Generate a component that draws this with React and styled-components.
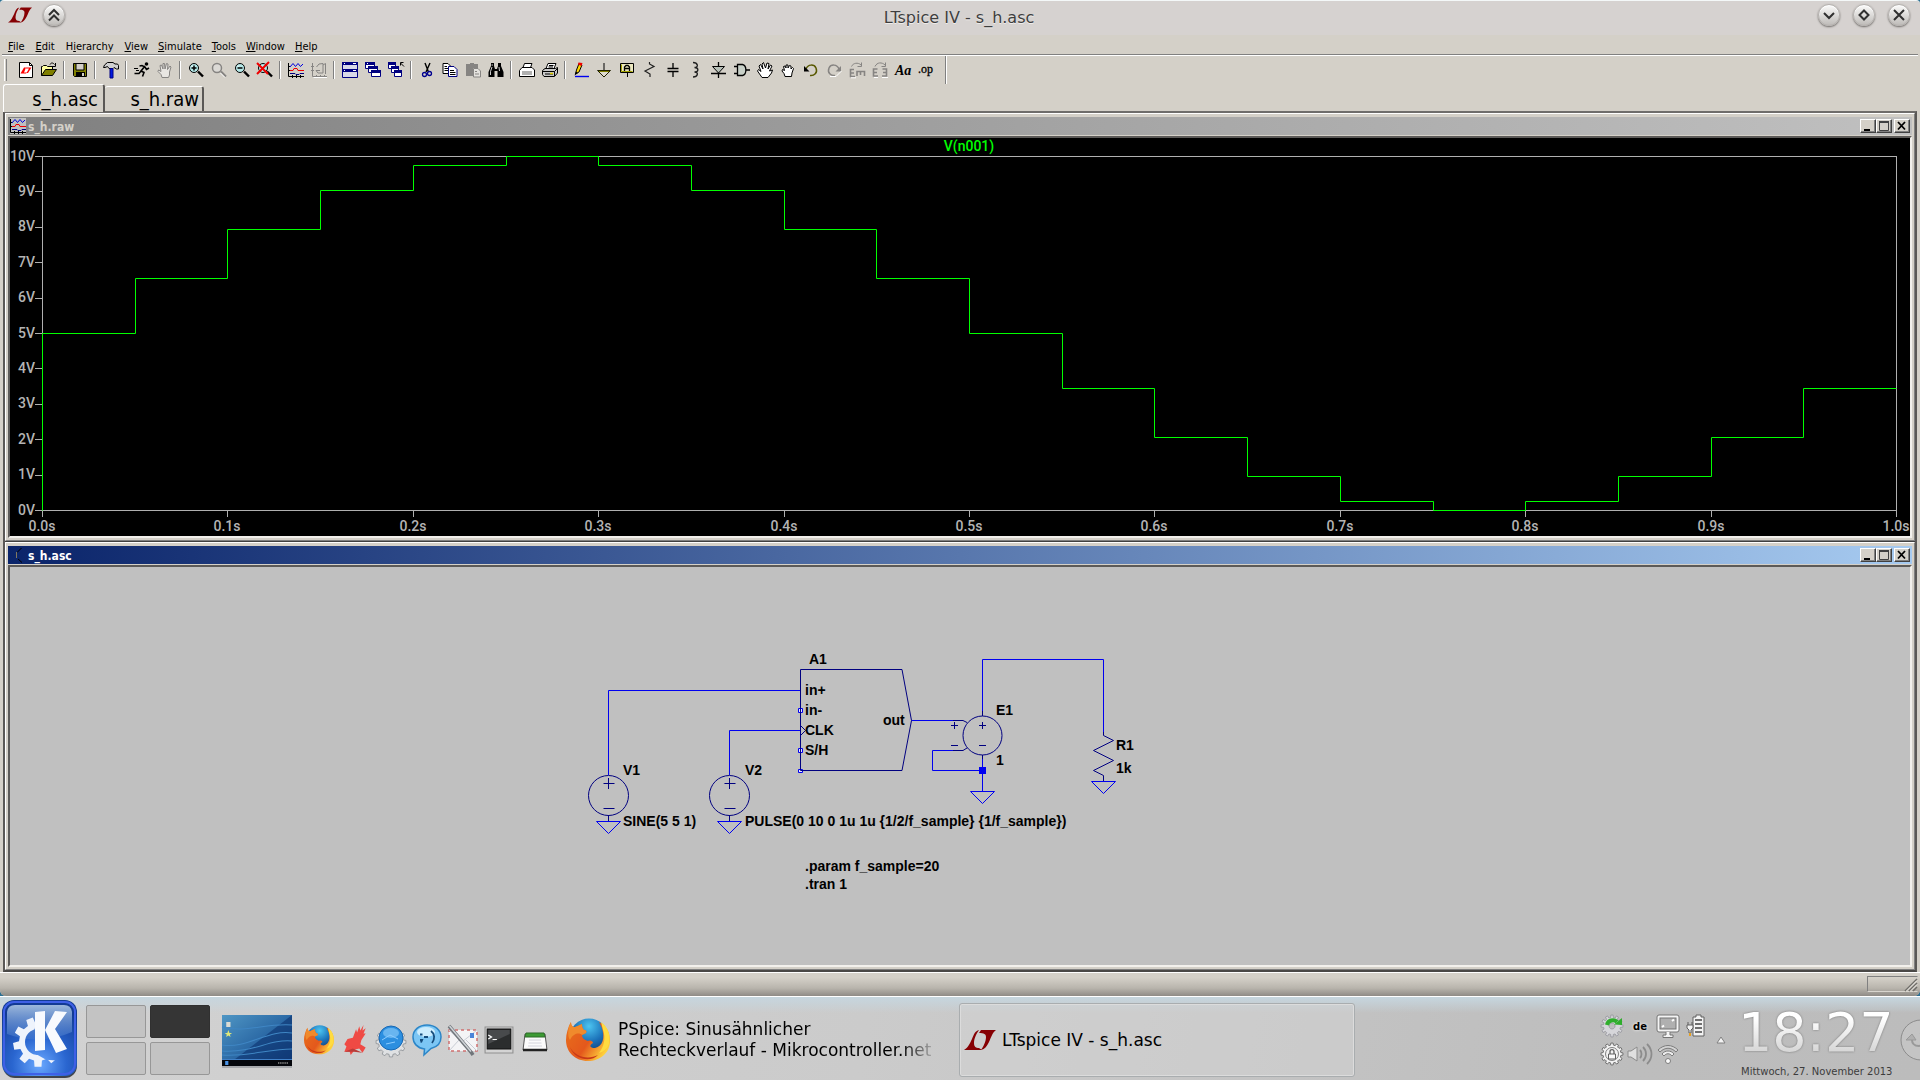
import React from "react";
import styled, { createGlobalStyle } from "styled-components";

const GlobalStyle = createGlobalStyle`
  * { box-sizing: border-box; }
  body {
    margin: 0;
    background: #2c6f92;
    font-family: "DejaVu Sans", sans-serif;
    color: #000;
  }
  button { font: inherit; color: inherit; padding: 0; margin: 0; background: none; border: none; }
  svg { display: block; overflow: visible; }
`;

const face = "#d4d0c8";
const wine = `"DejaVu Sans Condensed", "DejaVu Sans", sans-serif`;

/* ---------- main window ---------- */

const Desktop = styled.div`
  min-height: 100vh;
  display: flex;
  flex-direction: column;
`;

const AppWindow = styled.main`
  flex: 1;
  display: flex;
  flex-direction: column;
  background: ${face};
  border-radius: 4px 4px 6px 6px;
  border-top: 1px solid #f4f8f8;
`;

const TitleBar = styled.header`
  height: 34px;
  display: grid;
  grid-template-columns: 1fr auto 1fr;
  align-items: center;
  padding: 0 10px 6px 8px;
  background: #d6d2d0;
  border-radius: 4px 4px 0 0;
`;

const AppTitle = styled.h1`
  margin: 0;
  padding-top: 6px;
  font-size: 16px;
  font-weight: 400;
  line-height: 20px;
  color: #3e3e3e;
  text-shadow: 0 1px 0 #f0eeec;
`;

const TitleSide = styled.div`
  display: flex;
  align-items: center;
  gap: ${(p) => p.$gap}px;
  justify-content: ${(p) => (p.$end ? "flex-end" : "flex-start")};
`;

const RoundButton = styled.button`
  width: 22px;
  height: 22px;
  border-radius: 11px;
  background: linear-gradient(#fbfbfa, #bfbcb9);
  border: 1px solid #b4b1ae;
  box-shadow: 0 1px 2px #6c6966, inset 0 1px 0 #fff;
  display: grid;
  place-items: center;
`;

const MenuBar = styled.nav`
  height: 21px;
  display: flex;
  align-items: center;
  padding: 3px 0 0 1px;
  margin: 0 2px;
  border-bottom: 1px solid #fff;
  box-shadow: inset 0 -1px 0 #808080;
`;

const MenuItem = styled.button`
  padding: 0 6px 0 5px;
  margin-right: -1px;
  font-family: ${wine};
  font-size: 11px;
  line-height: 16px;
  &:nth-child(-n + 3) { margin-right: 0; }
`;

const ToolBar = styled.div`
  height: 28px;
  display: flex;
  align-items: center;
  padding-left: 4px;
`;

const Grip = styled.div`
  width: 3px;
  height: 22px;
  margin-right: 7px;
  border-left: 1px solid #fff;
  border-right: 1px solid #808080;
`;

const ToolButton = styled.button`
  width: 23px;
  height: 22px;
  display: grid;
  place-items: center;
  color: ${(p) => (p.disabled ? "#868482" : "#000")};
`;

const Divider = styled.div`
  width: 2px;
  height: ${(p) => (p.$tall ? 28 : 18)}px;
  margin: 0 ${(p) => (p.$tall ? 8 : 3)}px;
  border-left: 1px solid #808080;
  border-right: 1px solid #fff;
`;

const TabRow = styled.div`
  height: 27px;
  display: flex;
  align-items: flex-end;
  margin: 0 3px;
`;

const Tab = styled.button`
  width: ${(p) => (p.$active ? 102 : 99)}px;
  height: ${(p) => (p.$active ? 28 : 25)}px;
  margin-bottom: ${(p) => (p.$active ? -1 : 0)}px;
  padding-right: ${(p) => (p.$active ? 5 : 3)}px;
  text-align: right;
  font-family: ${wine};
  font-size: 20px;
  line-height: 24px;
  background: ${face};
  border-top: 1px solid #fff;
  border-left: ${(p) => (p.$active ? 1 : 0)}px solid #fff;
  border-right: 2px solid #5a5856;
  border-radius: 3px 3px 0 0;
  z-index: ${(p) => (p.$active ? 1 : 0)};
`;

const MdiArea = styled.div`
  flex: 1;
  min-height: 0;
  display: flex;
  flex-direction: column;
  gap: 1px;
  margin: 0 3px;
  border: 2px solid;
  border-color: #6f6d6b #5a5856 #4a4846 #5a5856;
  background: #404040;
`;

const Child = styled.section`
  flex: 1 1 0;
  min-height: 0;
  display: flex;
  flex-direction: column;
  padding: 3px 2px 2px;
  background: ${face};
  border: 1px solid;
  border-color: #fff #808080 #808080 #fff;
`;

const ChildTitle = styled.div`
  height: 18px;
  flex: none;
  display: flex;
  align-items: center;
  padding: 0 2px;
  margin-bottom: 1px;
  color: ${(p) => (p.$active ? "#fff" : face)};
  background: linear-gradient(
    to right,
    ${(p) => (p.$active ? "#0a246a, #a6caf0" : "#808080, #c0c0c0")}
  );
`;

const ChildName = styled.h2`
  flex: 1;
  margin: 0 0 0 2px;
  padding-top: 2px;
  font-family: ${wine};
  font-size: 12px;
  line-height: 16px;
  font-weight: 700;
`;

const ChildButton = styled.button`
  width: 16px;
  height: 14px;
  margin-left: ${(p) => (p.$apart ? 2 : 0)}px;
  background: ${face};
  border: 1px solid;
  border-color: #fff #404040 #404040 #fff;
  box-shadow: inset -1px -1px 0 #808080;
  display: grid;
  place-items: center;
`;

const Client = styled.div`
  flex: 1;
  min-height: 0;
  background: ${(p) => p.$bg};
  border: 2px solid;
  border-color: #5c5a58 #f2f0ec #f2f0ec #5c5a58;
`;

const Canvas = styled.svg`
  width: 100%;
  height: 100%;
`;

const StatusBar = styled.footer`
  height: 24px;
  flex: none;
  display: flex;
  justify-content: flex-end;
  padding: 3px 2px 4px;
  border-top: 1px solid #fff;
  background: linear-gradient(#d4d0c8 20%, #b9b5ad 65%, #8f8b86);
  border-radius: 0 0 6px 6px;
`;

const StatusPane = styled.div`
  width: 51px;
  border: 1px solid;
  border-color: #808080 transparent #d8d5ce #808080;
  display: flex;
  justify-content: flex-end;
  align-items: flex-end;
`;

/* ---------- panel ---------- */

const Panel = styled.div`
  height: 84px;
  flex: none;
  display: flex;
  align-items: center;
  padding-top: 3px;
  overflow: hidden;
  border-top: 1px solid #fff;
  background:
    linear-gradient(#c6d6df, rgba(200, 208, 212, 0) 16px),
    linear-gradient(100deg, #d2d2d2, #cbcbcb 45%, #bdbdbd 85%, #bcbcbc);
`;

const StartButton = styled.button`
  flex: none;
  margin: 0 8px 2px 2px;
`;

const Pager = styled.div`
  flex: none;
  display: grid;
  grid-template-columns: 60px 60px;
  grid-auto-rows: 33px;
  gap: 4px;
`;

const PagerCell = styled.button`
  border: 1px solid ${(p) => (p.$current ? "#303030" : "#979797")};
  border-radius: 2px;
  background: ${(p) => (p.$current ? "#353535" : "#c3c3c3")};
`;

const Thumb = styled.button`
  flex: none;
  margin: 3px 12px 0;
`;

const QuickLaunch = styled.div`
  flex: none;
  display: flex;
  align-items: center;
  gap: 6px;
`;

const Tasks = styled.div`
  flex: 1;
  min-width: 0;
  display: flex;
  margin-left: 13px;
`;

const Task = styled.button`
  flex: 0 1 396px;
  min-width: 0;
  height: 74px;
  display: flex;
  align-items: center;
  gap: ${(p) => (p.$active ? 6 : 8)}px;
  padding-left: ${(p) => (p.$active ? 4 : 2)}px;
  text-align: left;
  font-size: 17px;
  line-height: 21px;
  border: 1px solid ${(p) => (p.$active ? "#a9adaf" : "transparent")};
  border-radius: 3px;
  background: ${(p) => (p.$active ? "rgba(212, 212, 212, 0.5)" : "none")};
  box-shadow: ${(p) => (p.$active ? "inset 0 0 0 1px #dcdcdc" : "none")};
  svg { flex: none; }
`;

const TaskText = styled.span`
  overflow: hidden;
  white-space: pre;
  mask-image: ${(p) =>
    p.$fade ? "linear-gradient(to right, #000 calc(100% - 30px), rgba(0, 0, 0, 0.2))" : "none"};
`;

const Tray = styled.div`
  flex: none;
  display: grid;
  grid-template-columns: repeat(4, 28px);
  grid-auto-rows: 28px;
  place-items: center;
  margin-right: 6px;
`;

const Layout = styled.span`
  font-size: 10px;
  font-weight: 700;
  text-shadow: 0 0 3px #fff;
`;

const Clock = styled.div`
  flex: none;
  width: 162px;
  margin: 3px 0 0 12px;
  white-space: nowrap;
`;

const Time = styled.div`
  font-size: 54px;
  line-height: 58px;
  background: linear-gradient(#fff 25%, #d8d8d8 80%);
  background-clip: text;
  color: transparent;
  filter: drop-shadow(0 0 1px #777);
`;

const DateLine = styled.div`
  padding: 2px 0 0 3px;
  font-size: 10px;
  line-height: 16px;
  color: #3c3c3c;
`;

/* ---------- icons ---------- */

const Glyph = ({ w = 16, h = 16, box = "0 0 16 16", children, ...rest }) => (
  <svg width={w} height={h} viewBox={box} fill="none" stroke="none" aria-hidden="true" {...rest}>
    {children}
  </svg>
);

const LtLogo = ({ w, h }) => (
  <Glyph w={w} h={h} box="0 0 32 20" fill="#860003">
    <path d="M0 20C4 18 6 13 8 9C10 4 11 1 15 0C13 3 10 8 10 13C10 17 12 18 15 18L18 20Z" />
    <path d="M17 0H32C28 3 27 8 25 12C23 16 21 19 17 20C19 17 22 12 22 7C22 4 20 3 15 3Z" />
  </Glyph>
);

const gearPath = (cx, cy, rOut, rIn, teeth) => {
  const pts = [];
  for (let i = 0; i < teeth; i++) {
    [[-0.3, rIn], [-0.2, rOut], [0.2, rOut], [0.3, rIn]].forEach(([o, r]) => {
      const a = ((i + o) / teeth) * Math.PI * 2;
      pts.push(`${(cx + r * Math.cos(a)).toFixed(2)} ${(cy + r * Math.sin(a)).toFixed(2)}`);
    });
  }
  return `M${pts.join("L")}Z`;
};

const lens = (
  <>
    <circle cx="6" cy="6" r="4.500" fill="#b4e8e8" stroke="currentColor" />
    <path d="M3.500 5L5 3.500" stroke="#fff" />
    <path d="M10 9.500L15 14.500" stroke="currentColor" strokeWidth="2.400" />
  </>
);

const palm =
  "M5 15.500L4 12.500L1 9.500L1.500 8L4 9.500L3 3.500L4.500 3L6 7V1.500H7.500L8 7L9.500 1.500L11 2L10.500 7.500L13 4L14 5L12.500 10V13L11.500 15.500Z";

const fist =
  "M5 14.500L4 11.500L2 9L2.500 7.500L4.500 8.500L3.500 4.500L5 4L6 6V3H8V6L9.500 3.500L11 4V7L12.500 5.500L13.500 6.500L12 11L11.500 14.500Z";

const icons = {
  "New Schematic": (
    <>
      <path d="M1.500.5H11.500L14.500 3.500V15.500H1.500Z" fill="#fff" stroke="#000" />
      <path d="M11.500.5V3.500H14.500" stroke="#000" />
      <path d="M2.500 11.500L6 5.500H8L6 10.500H9L8 11.500ZM8 5.500H13.500L10 11H8.500L11 6.500H8Z" fill="#f00" />
    </>
  ),
  Open: (
    <>
      <path d="M.5 13.500V4.500H1.500L2.500 3.500H5.500L6.500 4.500H11.500V7.500" fill="#ffffa0" stroke="#000" />
      <path d="M.5 13.500L4.500 7.500H15.500L11.500 13.500Z" fill="#808000" stroke="#000" />
      <path d="M9 2.500C10 .5 12 .5 13.500 2.500M14.500 1V4.500H11" stroke="#000" />
    </>
  ),
  Save: (
    <>
      <path d="M1.500 1.500H14.500V14.500H2.500L1.500 13.500Z" fill="#808000" stroke="#000" />
      <path d="M4 1.500H12V8H4Z" fill={face} stroke="#000" />
      <path d="M4 10H13V14.500H4Z" fill="#000" />
      <path d="M10 11H12V14H10Z" fill={face} />
    </>
  ),
  "Control Panel": (
    <>
      <path d="M.5 5.500L1.500 3L4.500 .5H10L12 2H14.500L15.500 3.500V7H13.500L11 5.500L10 6.500H6L4.500 4.500L2 5.500Z" fill="#d0d0d0" stroke="#000" />
      <path d="M7 6.500H10V16H7Z" fill="#0018e0" stroke="#000080" />
    </>
  ),
  Run: (
    <>
      <circle cx="12.500" cy="2" r="1.800" fill="currentColor" />
      <path d="M11 4L7 9L10 10.500L8.500 14.500M7 9L5 11.500H.5M5.500 4L8 3.500L11 5L12.500 7.500L15 6" stroke="currentColor" strokeWidth="1.600" />
      <path d="M0 6.500H4M2 8.500H5" stroke="currentColor" />
    </>
  ),
  Halt: <path d={palm} fill="#e8e6e2" stroke="currentColor" />,
  "Zoom In": (
    <>
      {lens}
      <path d="M6 3.500V8.500M3.500 6H8.500" stroke="currentColor" strokeWidth="1.500" />
    </>
  ),
  "Zoom Area": (
    <>
      <circle cx="6" cy="6" r="4.500" fill="#dcdad6" stroke="currentColor" strokeWidth="1.500" />
      <path d="M10 9.500L15 14.500" stroke="currentColor" strokeWidth="2" />
      <path d="M9.500 11L14 15.500" stroke="#fff" />
    </>
  ),
  "Zoom Out": (
    <>
      {lens}
      <path d="M3.500 6H8.500" stroke="currentColor" strokeWidth="1.500" />
    </>
  ),
  "Zoom Full Extents": (
    <>
      {lens}
      <path d="M0 1L11 12M12 0L0 12" stroke="#f00000" strokeWidth="2" />
    </>
  ),
  Autorange: (
    <>
      <path d="M.5 1V14.500H16M0 4.500H2M0 8.500H2M4.500 13V16M8.500 13V16M12.500 13V16" stroke="#000" />
      <path d="M2 5L5 1.500L7.500 4.500L10 1.500L12.500 4.500L15 2" stroke="#0000e0" />
      <path d="M2 8.500H5L6 6.500H9L10 8.500H16" stroke="#f00000" />
      <path d="M2 11.500H7L8 12.500H11L12 11.500H16" stroke="#000080" />
    </>
  ),
  "Pick Visible Traces": (
    <>
      <path d="M1.500 1V14.500H16M0 4.500H3M0 8.500H3M5.500 13V16M9.500 13V16M13.500 13V16" stroke="currentColor" />
      <path d="M5.500 5L8 2L12 1.500V11H7L5 8.500H9M12 3L14.500 1.500V12" stroke="currentColor" />
      <path d="M2.500 15.500H16" stroke="#fff" />
    </>
  ),
  "Tile Windows": (
    <>
      <path d="M.5.5H15.500V15.500H.5Z" fill="#d8d8e8" stroke="#000080" />
      <path d="M0 1.500H16M0 8.500H16" stroke="#000080" strokeWidth="3" />
      <path d="M2 1.500H3M11 1.500H14M2 8.500H3M11 8.500H14" stroke="#fff" />
    </>
  ),
  Cascade: (
    <>
      <path d="M.5.5H9.500V6.500H.5ZM3.500 4.500H12.500V10.500H3.500ZM6.500 8.500H15.500V14.500H6.500Z" fill="#fff" stroke="#000080" />
      <path d="M0 1.500H10M3 5.500H13M6 9.500H16" stroke="#000080" strokeWidth="3" />
      <path d="M2 1.500H3" stroke="#fff" />
    </>
  ),
  "Close All": (
    <>
      <path d="M.5.5H7.500V6.500H.5ZM3.500 4.500H10.500V10.500H3.500ZM6.500 8.500H13.500V14.500H6.500Z" fill="#fff" stroke="#000080" />
      <path d="M0 1.500H8M3 5.500H11M6 9.500H14" stroke="#000080" strokeWidth="3" />
      <path d="M12.500.5H15.500M12.500.5V3.500M12.500 1L16 4.500" stroke="#000" />
    </>
  ),
  Cut: (
    <>
      <path d="M6 1L9.500 10M11 1L7 10" stroke="#000" strokeWidth="1.400" />
      <circle cx="5.500" cy="12.500" r="2" stroke="#000090" strokeWidth="1.300" />
      <circle cx="10.500" cy="11.500" r="2" stroke="#000090" strokeWidth="1.300" />
    </>
  ),
  Copy: (
    <>
      <path d="M1 1.500H6L8.500 4V11.500H1Z" fill="#fff" stroke="#000" />
      <path d="M6.500 4.500H12L15 7.500V14.500H6.500Z" fill="#fff" stroke="#000080" />
      <path d="M2.500 4.500H5M2.500 6.500H6M2.500 8.500H6M8 8.500H12M8 10.500H13.500M8 12.500H13.500" stroke="#000" />
    </>
  ),
  Paste: (
    <>
      <path d="M1 2H5V1H9V2H13V6H8V14H1Z" fill="currentColor" />
      <path d="M8.500 6.500H13L15.500 9V15H8.500Z" fill="#e4e2de" stroke="currentColor" />
      <path d="M10 9.500H12M10 12H14" stroke="currentColor" />
    </>
  ),
  Find: (
    <>
      <path d="M3 1H6V4L7 7H9L10 4V1H13V4L15.500 10V15H9.500V9H6.500V15H.5V10L3 4Z" fill="#000" />
      <path d="M4 5L2.500 9.500V13M11 5L11.500 9M3.500 3H5" stroke="#fff" strokeWidth=".8" />
    </>
  ),
  "Print Setup": (
    <>
      <path d="M4 5.500L5.500 1.500H13L11.500 5.500" fill="#fff" stroke="#000" />
      <path d="M.5 8.500L3 5.500H13L15.500 8V14.500H.5Z" fill="#fff" stroke="#000" />
      <path d="M3 9H13V13H3Z" fill="#b0b0b0" />
    </>
  ),
  Print: (
    <>
      <path d="M4 6.500L6 1.500H14L12 6.500" fill="#fff" stroke="#000" />
      <path d="M.5 8.500L3 6.500H13.500L15.500 5.500V11L12.500 14.500H2L.5 12.500Z" fill="#c8c8c8" stroke="#000" />
      <path d="M1 9.500H12.500V14M7 3.500H11.500M6.500 5H11M3 12H11M12.500 9.500L15.500 6.500" stroke="#000" />
      <path d="M8 11.500H11" stroke="#d8c800" strokeWidth="1.500" />
    </>
  ),
  Wire: (
    <>
      <path d="M2.500 12L3.500 8L6 1.500L9 3L6 10Z" fill="#ffd800" stroke="#000" />
      <path d="M5.500.5L9.500 1L8.500 4L5 2.500Z" fill="#f00000" />
      <path d="M1.500 13.500L3 9.500L5 11Z" fill="#000" />
      <path d="M2 14.500H16" stroke="#0000f0" strokeWidth="1.400" />
    </>
  ),
  Ground: (
    <>
      <path d="M8 1V8" stroke="#000" />
      <path d="M1.500 8.500H14.500L8 15Z" fill="#e0dcd0" stroke="#202000" />
      <path d="M3 9.500H13" stroke="#808000" />
    </>
  ),
  "Label Net": (
    <>
      <path d="M1.500 1.500H14.500V10.500H1.500Z" fill="#ece8c0" stroke="#000" />
      <path d="M2.500 2.500V9.500H13.500" stroke="#a0a000" />
      <path d="M5.500 9V5L7 3.500H9L10.500 5V9M5.500 6.500H10.500" stroke="#000" strokeWidth="1.300" />
      <path d="M8.500 10.500V15" stroke="#000" />
    </>
  ),
  Resistor: <path d="M7.500 0V2L12 4.500L3 9L8 12V15" stroke="#202020" strokeWidth="1.200" />,
  Capacitor: <path d="M8 1V6.500M2.500 6.500H13.500M2.500 9.500H13.500M8 9.500V15" stroke="#000" strokeWidth="1.300" />,
  Inductor: (
    <path d="M5 .5C10 .5 11 5.500 6.500 5.500C11 5.500 11 10 6.500 10C11 10 10 15 5 15" stroke="#202020" strokeWidth="1.300" />
  ),
  Diode: (
    <>
      <path d="M7.500 0V16M0 11.500H15" stroke="#000" strokeWidth="1.300" />
      <path d="M1.500 4.500H13.500L7.500 11Z" fill="#b8c0b8" stroke="#000" />
    </>
  ),
  Component: (
    <>
      <path d="M0 4.500H3M0 11.500H3M12 8H16" stroke="#000" strokeWidth="1.300" />
      <path d="M3.500 2.500H8.500C13 3.500 13 12.500 8.500 13.500H3.500Z" fill="#c8d0c8" stroke="#000" strokeWidth="1.300" />
    </>
  ),
  Move: (
    <path
      d="M5 15.500L.5 9L1.500 7.500L4 9.500L2 4L3.500 2.500L6 7L5 2L6.500.5L8.500 6L10 1L12 1.500L11 7L13.500 3L15 4L12.500 9L15.500 8L14.500 11L11 15.500Z"
      fill="#fff"
      stroke="#000"
    />
  ),
  Drag: <path d={fist} fill="#fff" stroke="#000" />,
  Undo: (
    <>
      <path d="M3 7C5 2 11 2 13 6C15 11 11 14 7 13.500" stroke="#585800" strokeWidth="1.500" />
      <path d="M1 4V9.500H6.500Z" fill="#000" />
    </>
  ),
  Redo: (
    <>
      <path d="M13 7C11 2 5 2 3 6C1 11 5 14 9 13.500" stroke="currentColor" strokeWidth="1.500" />
      <path d="M15 4V9.500H9.500Z" fill="currentColor" />
      <path d="M4 14.500H10L15.500 9" stroke="#fff" />
    </>
  ),
  Rotate: (
    <>
      <path d="M5 7.500H1.500V14.500H6M1.500 11H5M8 14V9.500H15.500V14M11.500 9.500V13" stroke="currentColor" strokeWidth="1.600" />
      <path d="M2.500 4.500C4 1 9 0 12 3M12.500.5V4.500H8.500" stroke="currentColor" />
      <path d="M2 15.800H7" stroke="#fff" />
    </>
  ),
  Mirror: (
    <>
      <path d="M5.500 7H1.500V14H6M1.500 10.500H5M10.500 7H14.500V14H10M14.500 10.500H11" stroke="currentColor" strokeWidth="1.600" />
      <path d="M3 4.500C5 0 10 0 13 3M13.500.5V4.500H9.500" stroke="currentColor" />
      <path d="M2 15.500H6M10 15.500H16" stroke="#fff" />
    </>
  ),
  Text: (
    <text x="0" y="13" fontFamily="Liberation Serif, serif" fontSize="14" fontStyle="italic" fontWeight="700" fill="#000">Aa</text>
  ),
  "Spice Directive": (
    <text x="0" y="11" fontFamily="Liberation Serif, serif" fontSize="12" fill="#000" stroke="#000" strokeWidth=".3">.op</text>
  ),
};

const toolGroups = [
  ["New Schematic", "Open"],
  ["Save"],
  ["Control Panel"],
  ["Run", "Halt"],
  ["Zoom In", "Zoom Area", "Zoom Out", "Zoom Full Extents"],
  ["Autorange", "Pick Visible Traces"],
  ["Tile Windows", "Cascade", "Close All"],
  ["Cut", "Copy", "Paste", "Find"],
  ["Print Setup", "Print"],
  ["Wire", "Ground", "Label Net", "Resistor", "Capacitor", "Inductor", "Diode", "Component",
    "Move", "Drag", "Undo", "Redo", "Rotate", "Mirror", "Text", "Spice Directive"],
];

const disabledTools = ["Halt", "Zoom Area", "Pick Visible Traces", "Paste", "Redo", "Rotate", "Mirror"];

const menus = ["File", "Edit", "Hierarchy", "View", "Simulate", "Tools", "Window", "Help"];

const Firefox = ({ size }) => (
  <Glyph w={size} h={size} box="0 0 44 44">
    <defs>
      <radialGradient id="ffBlue" cx=".5" cy=".2" r=".8">
        <stop offset="0" stopColor="#4cc4f0" />
        <stop offset=".5" stopColor="#1a70b8" />
        <stop offset="1" stopColor="#0c2c60" />
      </radialGradient>
      <linearGradient id="ffFox" x1="0" y1="0" x2="1" y2=".6">
        <stop offset="0" stopColor="#e8701c" />
        <stop offset=".6" stopColor="#e4581c" />
        <stop offset="1" stopColor="#ffd23c" />
      </linearGradient>
    </defs>
    <circle cx="23" cy="20" r="19.500" fill="url(#ffBlue)" />
    <path
      d="M5 4C5 7 6 9 9 9C12 8 14 7 16 6C16 8 16 10 18 12C20 12 21 13 20 15L16 17C16 20 18 22 22 23C24 22 27 23 27 25C22 28 25 30 29 30C37 28 39 20 36 10L33 4C41 8 44 15 44 23C44 35 34 43 22 43C9 43 0 34 0 22C0 16 2 9 5 4Z"
      fill="url(#ffFox)"
    />
    <path d="M35 4C42 9 45 17 43 26C41 31 37 34 33 35C38 29 40 20 37 12Z" fill="#ffdc40" />
    <path d="M5 4C5 7 6 9 9 9C12 8 14 7 16 6C16 8 16 10 18 12C20 12 21 13 20 15L16 17C14 15 8 14 4 22C1 18 2 9 5 4Z" fill="#f08a2c" />
    <path d="M4 29C9 39 22 42 32 37C26 44 9 43 4 29Z" fill="#c83818" />
  </Glyph>
);

const KLogo = () => (
  <Glyph w={76} h={78} box="0 0 76 78">
    <defs>
      <radialGradient id="kBlue" cx=".5" cy=".85" r=".8">
        <stop offset="0" stopColor="#6aa8ff" />
        <stop offset=".45" stopColor="#2a66d0" />
        <stop offset="1" stopColor="#123a94" />
      </radialGradient>
      <linearGradient id="kGloss" x1="0" y1="0" x2="0" y2="1">
        <stop offset="0" stopColor="#9cb8dc" />
        <stop offset="1" stopColor="#4478cc" stopOpacity=".5" />
      </linearGradient>
      <mask id="kCut">
        <rect width="76" height="78" fill="#fff" />
        <path d="M31 8H76V38L67 56L47 58L30 52Z" fill="#000" />
        <circle cx="36" cy="42" r="13" fill="#000" />
      </mask>
    </defs>
    <rect x="1" y="3" width="74" height="75" rx="12" fill="#40444c" />
    <rect x="0" y="0" width="75" height="76" rx="12" fill="url(#kBlue)" />
    <rect x="2" y="2" width="71" height="72" rx="10" stroke="#3f60e6" strokeWidth="2" />
    <path d="M5 12Q6 5 13 5H62Q69 5 70 12V32Q38 46 5 34Z" fill="url(#kGloss)" />
    <path d={gearPath(36, 42, 25, 19, 9)} fill="#eef3fc" mask="url(#kCut)" transform="rotate(10 36 42)" />
    <path d="M33 12L43 11V50L33 51ZM43 30L53 11L65 12L53 29L65 49L54 53Z" fill="#f8fafe" />
  </Glyph>
);

const quick = {
  Firefox: <Firefox size={30} />,
  Kontact: (
    <Glyph w={30} h={32} box="0 0 28 30">
      <path d="M4 26L6 21L4 19L7 14L12 13L15 5L16 8L18 2L19 6L22 1L21 6L24 4L22 9L24 9L20 15L19 19L24 22L21 27L18 23L14 24L10 29L9 26Z" fill="#ef4a44" />
      <path d="M4 26L12 23L21 27L13 26Z" fill="#b83c38" />
    </Glyph>
  ),
  Konqueror: (
    <Glyph w={30} h={30} box="0 0 30 30">
      <path d={gearPath(15, 17, 15, 12.5, 12)} fill="#dfe1e3" stroke="#8a8f94" strokeWidth=".8" />
      <circle cx="15" cy="13" r="12" fill="#2c8fe0" stroke="#1868b4" />
      <ellipse cx="15" cy="8" rx="8" ry="5" fill="#a4dcff" opacity=".5" />
      <path d="M6 15L14 10L22 14M10 19L19 17" stroke="#8cccff" />
    </Glyph>
  ),
  Kopete: (
    <Glyph w={30} h={32} box="0 0 30 32">
      <path d="M15 1C23 1 29 6 29 13C29 19 25 23 19 24.500L12 31L12.500 25C5 24 1 19 1 13C1 6 7 1 15 1Z" fill="#7cc6f4" stroke="#2c86c8" strokeWidth="1.500" />
      <ellipse cx="14" cy="8" rx="9" ry="5" fill="#e0f5ff" opacity=".8" />
      <path d="M19 7C23 10 23 15 20 19M12 13H16" stroke="#164c7c" strokeWidth="1.800" />
      <path d="M8 10.500H10.500M8 16L10 16L9 18.500" stroke="#164c7c" strokeWidth="2" />
    </Glyph>
  ),
  Mail: (
    <Glyph w={30} h={30} box="0 0 30 30">
      <path d="M1 5H29V26H1Z" fill="#f4f4f6" stroke="#d07070" strokeDasharray="3 3" strokeWidth="1.500" />
      <path d="M1 5L14 17L29 5M1 26L11 15M29 26L18 15" stroke="#c8ccd4" />
      <path d="M22 8H26V13H22Z" fill="#4a84d8" />
      <path d="M1 1L23 27L25 30" stroke="#70757a" strokeWidth="3.500" />
      <path d="M1.500 1L23 26.500" stroke="#d0d4d8" strokeWidth="1.500" />
    </Glyph>
  ),
  Konsole: (
    <Glyph w={30} h={28} box="0 0 28 28" preserveAspectRatio="none">
      <path d="M1 1H27V27H1Z" fill="#d4d4d4" stroke="#909090" />
      <path d="M3 3H25V23H3Z" fill="#2b2d2e" stroke="#111" />
      <path d="M4 4H24V8L4 18Z" fill="#484a4c" />
      <path d="M4 9L7 11L4 13M8 13.500H12" stroke="#fff" strokeWidth="1.200" />
    </Glyph>
  ),
  Organizer: (
    <Glyph w={30} h={28} box="-2 -1 30 28">
      <path d="M3 7L1 23H25L23 7Z" fill="#fbfbfb" stroke="#555" />
      <path d="M4 6H22L23 10H3Z" fill="#3c9a34" stroke="#2c6a28" />
      <path d="M7 13H19M6.500 16H19.500M6 19H20" stroke="#d4d4dc" />
      <path d="M1 23H25" stroke="#222" strokeWidth="2.500" />
    </Glyph>
  ),
};

const DesktopThumb = () => (
  <Glyph w={70} h={54} box="0 0 66 54" preserveAspectRatio="none">
    <defs>
      <linearGradient id="wall" x1="0" y1="0" x2="1" y2="1">
        <stop offset="0" stopColor="#4f96c4" />
        <stop offset=".5" stopColor="#2c6aa6" />
        <stop offset="1" stopColor="#123f7c" />
      </linearGradient>
    </defs>
    <rect width="66" height="51" fill="url(#wall)" />
    <path d="M66 0V46H10Z" fill="#0c3270" opacity=".6" />
    <path d="M0 12C24 18 40 8 66 10M0 30C24 34 44 14 66 18M0 36C30 38 44 24 66 26M0 40C24 42 44 34 66 34" stroke="#3f86c4" />
    <path d="M0 45H66V51H0Z" fill="#05070c" />
    <path d="M0 44.500H66" stroke="#4080c8" />
    <path d="M3 46H6V50H3Z" fill="#4a94e8" />
    <path d="M53 48H62" stroke="#888" strokeWidth="2" strokeDasharray="1 1" />
    <path d="M4 7H8V12H4Z" fill="#dcdcd4" />
    <path d="M6 15L7 18H9.500L7.500 19.500L8 22L6 20.500L4 22L4.500 19.500L2.500 18H5Z" fill="#e0e878" />
    <path d="M0 52H66" stroke="#a8aaae" strokeWidth="2" />
  </Glyph>
);

const trayIcons = [
  <Glyph key="update" w={22} h={22} box="0 0 22 22">
    <path fillRule="evenodd" d={`${gearPath(11, 11, 11, 8.5, 12)}M11 8a3 3 0 1 0 .1 0Z`} fill="#d6d6da" stroke="#8e8e96" strokeWidth=".7" />
    <path d="M6 10C7 5 13 4 16 7" stroke="#2fae2c" strokeWidth="4" />
    <path d="M13 9.500L21 10V3Z" fill="#2fae2c" />
  </Glyph>,
  <Layout key="layout">de</Layout>,
  <Glyph key="display" w={24} h={24} box="0 0 24 24" stroke="#747474">
    <rect x="1" y="1" width="22" height="17" rx="2" fill="#f4f4f4" />
    <rect x="4" y="4" width="16" height="11" fill="#b0b0b0" />
    <path d="M10 18V21H7V23.500H17V21H14V18" fill="#f4f4f4" />
    <path d="M16 7L18 5.500M6 13L8 11.500" stroke="#fff" strokeWidth="2" />
  </Glyph>,
  <Glyph key="battery" w={20} h={24} box="0 0 20 24" stroke="#606060">
    <path d="M7 3H10V1H15V3H18V22H7Z" fill="#f4f4f4" />
    <path d="M9 6H16M9 10H16M9 14H16M9 18H16" stroke="#707070" strokeWidth="2" />
    <path d="M2 8V11M6 8V11M1 11H7V14L5 16V19H3V16L1 14Z" fill="#f4f4f4" />
    <path d="M4 19V22" stroke="#e8a020" strokeWidth="2" />
  </Glyph>,
  <Glyph key="lock" w={22} h={22} box="0 0 22 22">
    <path d={gearPath(11, 11, 11, 9, 12)} fill="#f2f2f2" stroke="#707070" />
    <circle cx="11" cy="11" r="6.500" stroke="#808080" />
    <path d="M7.500 11H14.500V16H7.500Z" fill="#f8f8f8" stroke="#606060" />
    <path d="M9 11V8.500C9 6 13 6 13 8.500V11" stroke="#606060" strokeWidth="1.300" />
  </Glyph>,
  <Glyph key="volume" w={26} h={24} box="0 0 26 24" stroke="#8c8c8c">
    <path d="M1 9H4L10 5V19L4 15H1Z" fill="#e0e0e0" />
    <path d="M13 8C15 10 15 14 13 16M16 5C20 9 20 15 16 19M20 2C26 8 26 16 20 22" strokeWidth="1.800" />
  </Glyph>,
  <Glyph key="wifi" w={22} h={20} box="0 0 22 20" stroke="#7c7c7c">
    <path d="M1 6C7 0 15 0 21 6L19 8C14 3 8 3 3 8Z" fill="#d4d4d4" />
    <path d="M5 10C8 6 14 6 17 10L15 12C13 9 9 9 7 12Z" fill="#eee" />
    <circle cx="11" cy="17" r="2.500" fill="#fafafa" />
  </Glyph>,
];

/* ---------- waveform ---------- */

const plot = { left: 32.5, right: 1886.5, top: 18.5, bottom: 372.5 };
const px = (t) => plot.left + t * (plot.right - plot.left);
const py = (v) => plot.bottom - (v / 10) * (plot.bottom - plot.top);

const steps = Array.from({ length: 20 }, (_, k) => 5 + 5 * Math.sin((2 * Math.PI * k) / 20));
const trace = steps.reduce(
  (d, v, k) => `${d}V${Math.floor(py(v)) + 0.5}H${Math.floor(px((k + 1) / 20)) + 0.5}`,
  `M${px(0)} ${py(0)}`
);
const ticks = Array.from({ length: 11 }, (_, i) => i);

const Waveform = () => (
  <Canvas viewBox="0 0 1900 398" role="img" aria-label="V(n001) over time">
    <rect x={plot.left} y={plot.top} width={plot.right - plot.left} height={plot.bottom - plot.top} fill="none" stroke="#b0b0b0" />
    <g stroke="#b0b0b0">
      {ticks.map((i) => (
        <path key={i} d={`M25 ${Math.floor(py(i)) + 0.5}H32M${Math.floor(px(i / 10)) + 0.5} 373V379`} />
      ))}
    </g>
    <g fill="#b4b4b4" fontFamily="Roboto, sans-serif" fontWeight="500" fontSize="14">
      {ticks.map((i) => (
        <React.Fragment key={i}>
          <text x="25" y={Math.round(py(i)) + 4} textAnchor="end">{i}V</text>
          <text x={Math.floor(px(i / 10))} y="393" textAnchor="middle">{(i / 10).toFixed(1)}s</text>
        </React.Fragment>
      ))}
      <text x="959" y="13" textAnchor="middle" fill="#0f0">V(n001)</text>
    </g>
    <path d={trace} fill="none" stroke="#0f0" />
  </Canvas>
);

/* ---------- schematic ---------- */

const GroundSymbol = ({ x, y }) => <path d={`M${x - 12} ${y}H${x + 12}L${x} ${y + 12}Z`} stroke="#0000f0" />;

const Source = ({ x }) => (
  <>
    <circle cx={x} cy="228.500" r="20" />
    <path d={`M${x} 211V222M${x - 5} 216.500H${x + 6}M${x - 5} 241.500H${x + 6}M${x} 248V254`} />
    <GroundSymbol x={x} y={254.5} />
  </>
);

const labels = [
  [799, 97, "A1"],
  [795, 128, "in+"],
  [795, 148, "in-"],
  [795, 168, "CLK"],
  [795, 188, "S/H"],
  [873, 158, "out"],
  [613, 208, "V1"],
  [735, 208, "V2"],
  [613, 259, "SINE(5 5 1)"],
  [735, 259, "PULSE(0 10 0 1u 1u {1/2/f_sample} {1/f_sample})"],
  [795, 304, ".param f_sample=20"],
  [795, 322, ".tran 1"],
  [986, 148, "E1"],
  [986, 198, "1"],
  [1106, 183, "R1"],
  [1106, 206, "1k"],
];

const Schematic = () => (
  <Canvas viewBox="0 0 1900 398" role="img" aria-label="Sample and hold circuit">
    <g fill="none" stroke="#0000f0">
      <path d="M598.500 208V123.500H790.500M719.500 208V163.500H790.500" />
      <path d="M901.500 153.500H943M972.500 144V92.500H1093.500V165M943 183.500H922.500V203.500H972.500M972.500 192V224" />
      <path d="M788.500 141.500h4v4h-4ZM788.500 181.500h4v4h-4ZM788.500 202.500h4v3h-4Z" fill="#e8e8ff" />
      <path d="M969 200h7v7h-7Z" fill="#0000f0" stroke="none" />
    </g>
    <g fill="none" stroke="#000080">
      <path d="M790.500 102.500H892L901.500 153.500L892 203.500H790.500Z" />
      <path d="M790.500 158.500L795.500 163.500L790.500 168.500" />
      <Source x={598.5} />
      <Source x={719.5} />
      <circle cx="972.500" cy="168.500" r="19.500" />
      <path d="M972.500 144V149M972.500 188V192M943 153.500H953L957 155.500M943 183.500H953L957 181" />
      <path d="M972.500 155V162M969 158.500H976M969 178.500H976M944.500 155V162M941 158.500H948M941 178.500H948" />
      <path d="M1093.500 165V168.500L1103.500 173.500L1083.500 183.500L1103.500 193.500L1083.500 203.500L1093.500 208.500V214" />
      <GroundSymbol x={972.5} y={224.5} />
      <GroundSymbol x={1093.5} y={214.5} />
    </g>
    <g fontFamily="Liberation Sans, sans-serif" fontWeight="700" fontSize="14">
      {labels.map(([x, y, text]) => (
        <text key={text} x={x} y={y}>{text}</text>
      ))}
    </g>
  </Canvas>
);

const ChildWindow = ({ name, icon, active, bg, children }) => (
  <Child>
    <ChildTitle $active={active}>
      {icon}
      <ChildName>{name}</ChildName>
      <ChildButton aria-label="Minimize">
        <Glyph w={10} h={10} box="0 0 10 10"><path d="M1 9H7" stroke="#000" strokeWidth="2" /></Glyph>
      </ChildButton>
      <ChildButton aria-label="Maximize">
        <Glyph w={10} h={10} box="0 0 10 10"><path d="M.5 1V9.500H9.500V1" stroke="#404040" /><path d="M0 1H10" stroke="#404040" strokeWidth="2" /></Glyph>
      </ChildButton>
      <ChildButton $apart aria-label="Close">
        <Glyph w={10} h={10} box="0 0 10 10"><path d="M1 1L8 8.500M8 1L1 8.500" stroke="#000" strokeWidth="1.800" /></Glyph>
      </ChildButton>
    </ChildTitle>
    <Client $bg={bg}>{children}</Client>
  </Child>
);

const App = () => {
  return (
    <>
      <GlobalStyle />
      <Desktop>
        <AppWindow>
          <TitleBar>
            <TitleSide $gap={11}>
              <LtLogo w={24} h={16} />
              <RoundButton aria-label="Shade">
                <Glyph><path d="M3 8L8 3L13 8M3 13.500L8 8.500L13 13.500" stroke="#303030" strokeWidth="2" /></Glyph>
              </RoundButton>
            </TitleSide>
            <AppTitle>LTspice IV - s_h.asc</AppTitle>
            <TitleSide $end $gap={13}>
              <RoundButton aria-label="Minimize">
                <Glyph><path d="M3 6L8 11L13 6" stroke="#303030" strokeWidth="2" /></Glyph>
              </RoundButton>
              <RoundButton aria-label="Maximize">
                <Glyph><path d="M8 3.500L12.500 8L8 12.500L3.500 8Z" stroke="#303030" strokeWidth="2" /></Glyph>
              </RoundButton>
              <RoundButton aria-label="Close">
                <Glyph><path d="M3 3L13 13M13 3L3 13" stroke="#303030" strokeWidth="2" /></Glyph>
              </RoundButton>
            </TitleSide>
          </TitleBar>

          <MenuBar>
            {menus.map((m) => (
              <MenuItem key={m}>
                {m === "Hierarchy" ? <>H<u>i</u>erarchy</> : <><u>{m[0]}</u>{m.slice(1)}</>}
              </MenuItem>
            ))}
          </MenuBar>

          <ToolBar>
            <Grip />
            {toolGroups.map((group, i) => (
              <React.Fragment key={i}>
                {i > 0 && <Divider />}
                {group.map((name) => (
                  <ToolButton key={name} aria-label={name} disabled={disabledTools.includes(name)}>
                    <Glyph>{icons[name]}</Glyph>
                  </ToolButton>
                ))}
              </React.Fragment>
            ))}
            <Divider $tall />
          </ToolBar>

          <TabRow>
            <Tab $active>s_h.asc</Tab>
            <Tab>s_h.raw</Tab>
          </TabRow>

          <MdiArea>
            <ChildWindow
              name="s_h.raw"
              bg="#000"
              icon={
                <Glyph>
                  <path d="M0 0H16V16H0Z" fill="#c0c0c0" />
                  {icons.Autorange}
                </Glyph>
              }
            >
              <Waveform />
            </ChildWindow>
            <ChildWindow
              name="s_h.asc"
              bg="#c0c0c0"
              active
              icon={
                <Glyph>
                  <path d="M11.500 1L7 5.500M8 12L12 15.500" stroke="#000" />
                  <path d="M6.500 5V11" stroke="#807860" />
                </Glyph>
              }
            >
              <Schematic />
            </ChildWindow>
          </MdiArea>

          <StatusBar>
            <StatusPane>
              <Glyph w={12} h={12} box="0 0 12 12">
                <path d="M0 12L12 0M4 12L12 4M8 12L12 8" stroke="#706e6a" strokeWidth="1.500" />
                <path d="M1.500 12L12 1.500M5.500 12L12 5.500" stroke="#f0eee8" />
              </Glyph>
            </StatusPane>
          </StatusBar>
        </AppWindow>

        <Panel>
          <StartButton aria-label="Application launcher"><KLogo /></StartButton>
          <Pager>
            {[1, 2, 3, 4].map((n) => (
              <PagerCell key={n} $current={n === 2} aria-label={`Desktop ${n}`} />
            ))}
          </Pager>
          <Thumb aria-label="Show desktop"><DesktopThumb /></Thumb>
          <QuickLaunch>
            {Object.keys(quick).map((name) => (
              <button key={name} aria-label={name}>{quick[name]}</button>
            ))}
          </QuickLaunch>
          <Tasks>
            <Task>
              <Firefox size={44} />
              <TaskText $fade>{"PSpice: Sinusähnlicher\nRechteckverlauf - Mikrocontroller.net"}</TaskText>
            </Task>
            <Task $active>
              <LtLogo w={32} h={20} />
              <TaskText>LTspice IV - s_h.asc</TaskText>
            </Task>
          </Tasks>
          <Tray>{trayIcons}</Tray>
          <Glyph w={10} h={8} box="0 0 10 8"><path d="M5 1L9 7H1Z" fill="#f4f4f4" stroke="#808080" /></Glyph>
          <Clock>
            <Time>18:27</Time>
            <DateLine>Mittwoch, 27. November 2013</DateLine>
          </Clock>
          <Glyph w={20} h={44} box="0 0 20 44">
            <circle cx="21" cy="22" r="20" fill="#c4c4c4" stroke="#8c8c8c" />
            <path d="M20 16C26 15 27 27 19 28C14 28 12 25 12 22" stroke="#999" strokeWidth="2" />
            <path d="M6 22L12 16L16 22Z" fill="#b0b0b0" stroke="#999" />
          </Glyph>
        </Panel>
      </Desktop>
    </>
  );
};

export default App;
